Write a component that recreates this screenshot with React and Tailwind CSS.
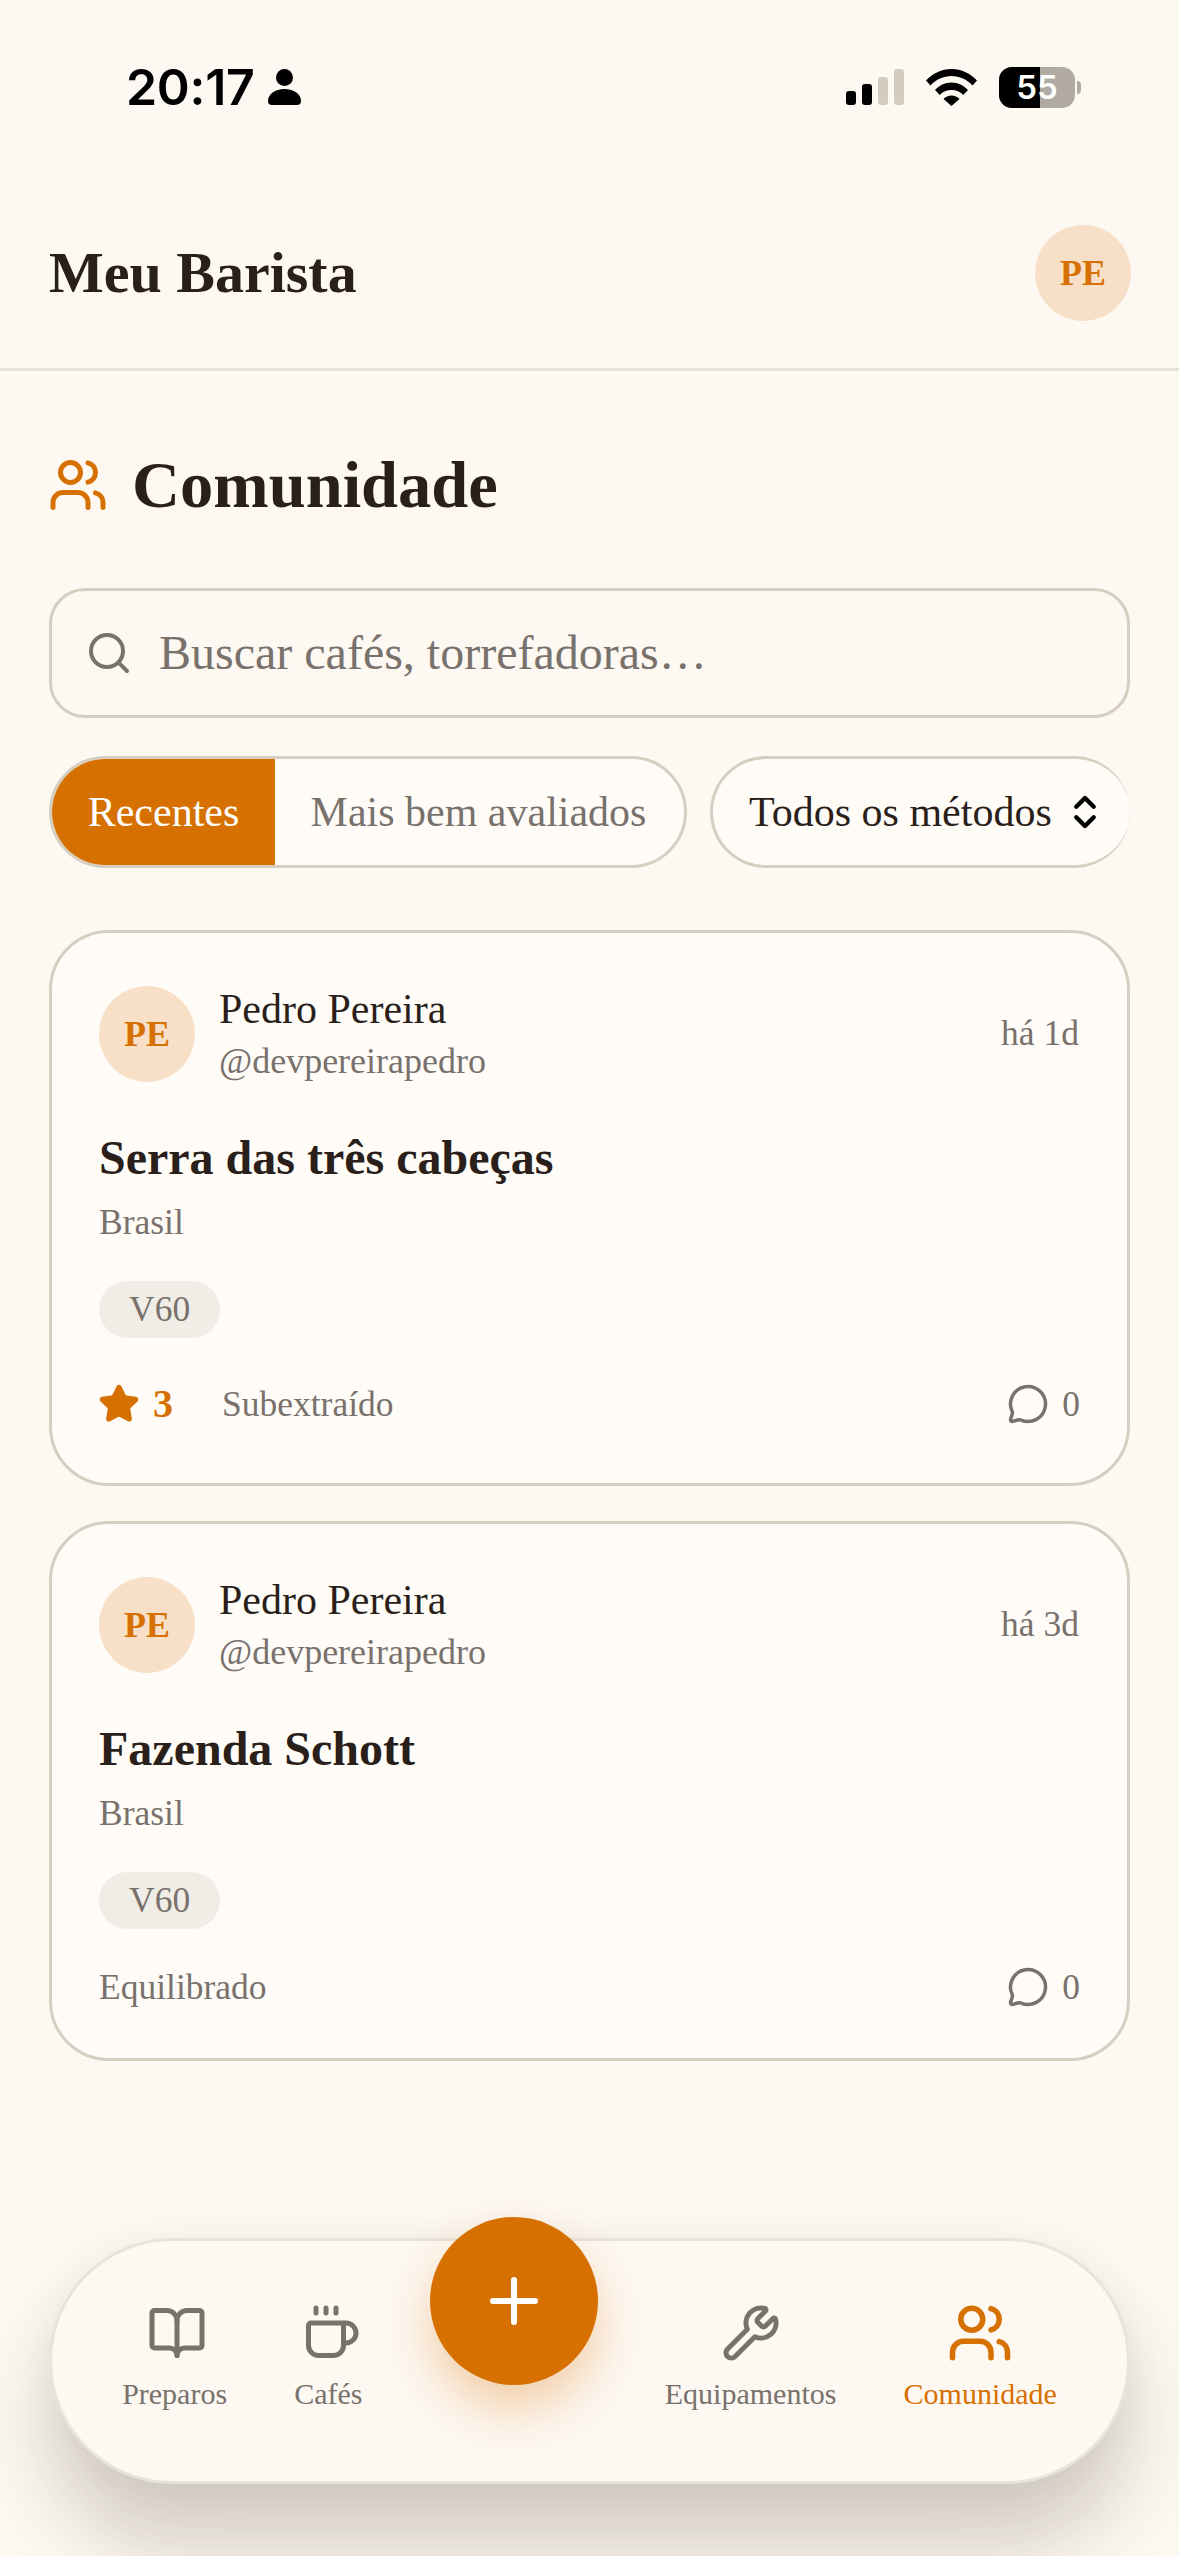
import React from 'react';
import { BookOpen, ChevronsUpDown, Coffee, MessageCircle, Plus, Search, Star, Users, Wrench } from 'lucide-react';

const SERIF = "font-['Liberation_Serif',serif]";

const posts = [
  { id: 1, time: 'há 1d', title: 'Serra das três cabeças', rating: 3, taste: 'Subextraído' },
  { id: 2, time: 'há 3d', title: 'Fazenda Schott', rating: null, taste: 'Equilibrado' },
];

const navLeft = [
  { label: 'Preparos', Icon: BookOpen, iconClass: 'ml-[4px]' },
  { label: 'Cafés', Icon: Coffee, iconClass: 'ml-[5px]' },
];
const navRight = [
  { label: 'Equipamentos', Icon: Wrench },
  { label: 'Comunidade', Icon: Users, active: true },
];

const StatusBar = () => (
  <div className="h-[176px] pb-[2px] flex items-center justify-between pl-[126px] pr-[98px] text-black font-['Inter',sans-serif]">
    <div className="flex items-center gap-[13px]">
      <span className="text-[50px] leading-none font-semibold tracking-[-0.3px]">20:17</span>
      <svg width="33" height="36" viewBox="0 0 33 36">
        <circle cx="16.5" cy="8.5" r="8.5" fill="black" />
        <path d="M0 32c0-7 7-12 16.5-12S33 25 33 32c0 3-2 4-4 4H4c-2 0-4-1-4-4z" fill="black" />
      </svg>
    </div>
    <div className="flex items-center">
      <div className="flex items-end gap-[6px] mr-[22px]">
        <div className="w-[10px] h-[14px] rounded-[3px] bg-black" />
        <div className="w-[10px] h-[21px] rounded-[3px] bg-black" />
        <div className="w-[10px] h-[28px] rounded-[3px] bg-[#d2ccc1]" />
        <div className="w-[10px] h-[36px] rounded-[3px] bg-[#d2ccc1]" />
      </div>
      <svg width="51" height="37" viewBox="0 0 51 37" className="mr-[22px]">
        <path d="M0 11.5C6.5 4.5 15.500 0 25.500 0S44.500 4.500 51 11.500l-4.500 5C41 10.500 33.500 7 25.500 7S10 10.500 4.500 16.500z" fill="black" />
        <path d="M9 21c4-4.500 10-7.500 16.500-7.500S38 16.500 42 21l-4.800 5c-3-3.200-7-5-11.700-5s-8.700 1.800-11.700 5z" fill="black" />
        <path d="M17.500 30c2-2.200 5-3.500 8-3.500s6 1.300 8 3.500l-8 7z" fill="black" />
      </svg>
      <div className="relative w-[76px] h-[41px] rounded-[13px] bg-[#b0aaa3] overflow-hidden flex items-center justify-center">
        <div className="absolute left-0 top-0 bottom-0 w-[41px] bg-black" />
        <span className="relative text-white text-[33px] leading-none font-semibold">55</span>
      </div>
      <div className="w-[4px] h-[13px] ml-[2px] rounded-r-full bg-[#b0aaa3]" />
    </div>
  </div>
);

const Avatar = () => (
  <div className={`w-[96px] h-[96px] shrink-0 rounded-full bg-[#f8e0c8] text-[#d67000] flex items-center justify-center text-[36px] font-bold ${SERIF}`}>
    PE
  </div>
);

const PostCard = ({ post }) => (
  <div className="bg-[#fffcf8] border-[3px] border-[#d6cec0] rounded-[60px] pt-[49px] pl-[47px] pr-[48px] pb-[49px]">
    <div className="flex items-center">
      <Avatar />
      <div className="ml-[24px] flex-1">
        <div className="text-[42px] leading-[54px] text-[#2a1f1a]">Pedro Pereira</div>
        <div className="text-[36px] leading-[50px] text-[#78716c]">@devpereirapedro</div>
      </div>
      <div className="text-[35.500px] text-[#78716c]">{post.time}</div>
    </div>
    <div className="mt-[42px] text-[48px] leading-[60px] font-bold text-[#2a1f1a]">{post.title}</div>
    <div className="mt-[10px] text-[35.500px] leading-[48px] text-[#78716c]">Brasil</div>
    <div className="mt-[35px] flex">
      <span className="h-[57px] px-[30px] rounded-full bg-[#f0ede6] text-[35.500px] leading-[57px] text-[#78716c]">V60</span>
    </div>
    <div className="mt-[36px] flex items-center justify-between">
      <div className="flex items-center">
        {post.rating !== null && (
          <div className="h-[60px] flex items-center mr-[49px]">
            <Star size={42} fill="#d67000" color="#d67000" strokeWidth={2} className="-ml-[1px]" />
            <span className="ml-[13px] text-[40px] font-bold text-[#d67000]">{post.rating}</span>
          </div>
        )}
        <span className="text-[35.500px] leading-[44px] text-[#78716c]">{post.taste}</span>
      </div>
      <div className="flex items-center gap-[13px] -mr-[1px] text-[35.500px] leading-[44px] text-[#78716c]">
        <MessageCircle size={42} color="#78716c" strokeWidth={2} />
        <span>0</span>
      </div>
    </div>
  </div>
);

const NavItem = ({ label, Icon, active, iconClass = '' }) => (
  <div className={`flex flex-col items-center ${active ? 'text-[#d67000]' : 'text-[#78716c]'}`}>
    <div className={`h-[66px] flex items-center justify-center ${iconClass}`}>
      <Icon size={active ? 66 : 60} strokeWidth={2} />
    </div>
    <span className="mt-[8px] text-[30px] leading-[40px]">{label}</span>
  </div>
);

const BottomNav = () => (
  <div className="mt-auto mx-[49px] mb-[72px] h-[246px] pt-[59px] px-[3px] rounded-full bg-[#fdf8f2] border-[3px] border-[#e8e3db] shadow-[0_60px_80px_rgba(60,45,30,0.22),0_0_40px_rgba(60,45,30,0.04)] flex items-start justify-evenly">
    {navLeft.map(item => <NavItem key={item.label} {...item} />)}
    <button className="w-[168px] h-[168px] -mt-[83px] rounded-full bg-[#d67000] text-white flex items-center justify-center shadow-[0_24px_48px_rgba(217,112,0,0.3)]">
      <Plus size={72} strokeWidth={2} />
    </button>
    {navRight.map(item => <NavItem key={item.label} {...item} />)}
  </div>
);

export default function App() {
  return (
    <div className={`h-[2556px] w-[1179px] overflow-hidden bg-[#fdf8f2] flex flex-col ${SERIF}`}>
      <StatusBar />
      <header className="flex items-center justify-between pt-[49px] pb-[47px] pl-[49px] pr-[48px] border-b-[3px] border-[#e8e3db]">
        <h1 className="text-[58px] leading-none font-bold text-[#2a1f1a]">Meu Barista</h1>
        <Avatar />
      </header>
      <main className="px-[49px]">
        <div className="mt-[74px] h-[80px] flex items-center">
          <Users size={60} color="#d67000" strokeWidth={2} className="-ml-[1px]" />
          <h2 className="ml-[24px] text-[66.500px] leading-none font-bold text-[#2a1f1a]">Comunidade</h2>
        </div>
        <div className="mt-[63px] h-[130px] rounded-[36px] border-[3px] border-[#d6cec0] flex items-center pl-[33px]">
          <Search size={48} color="#78716c" strokeWidth={2} />
          <span className="ml-[26px] text-[48px] text-[#78716c]">Buscar cafés, torrefadoras…</span>
        </div>
        <div className="mt-[38px] flex">
          <div className="w-[638px] h-[112px] rounded-[56px] border-[3px] border-[#d6cec0] bg-[#fffcf8] overflow-hidden flex items-center text-[42px]">
            <div className="w-[223px] h-full bg-[#d67000] text-white flex items-center justify-center">Recentes</div>
            <div className="flex-1 text-center pr-[2px] text-[#78716c]">Mais bem avaliados</div>
          </div>
          <div className="ml-[23px] flex-1 h-[112px] rounded-[56px] border-[3px] border-r-0 border-[#d6cec0] bg-[#fffcf8] flex items-center pl-[36px] text-[42px] text-[#2a1f1a]">
            <span>Todos os métodos</span>
            <ChevronsUpDown size={42} color="black" strokeWidth={2.500} className="ml-[12px]" />
          </div>
        </div>
        <div className="mt-[62px] flex flex-col gap-[35px]">
          {posts.map(post => <PostCard key={post.id} post={post} />)}
        </div>
      </main>
      <BottomNav />
    </div>
  );
}
